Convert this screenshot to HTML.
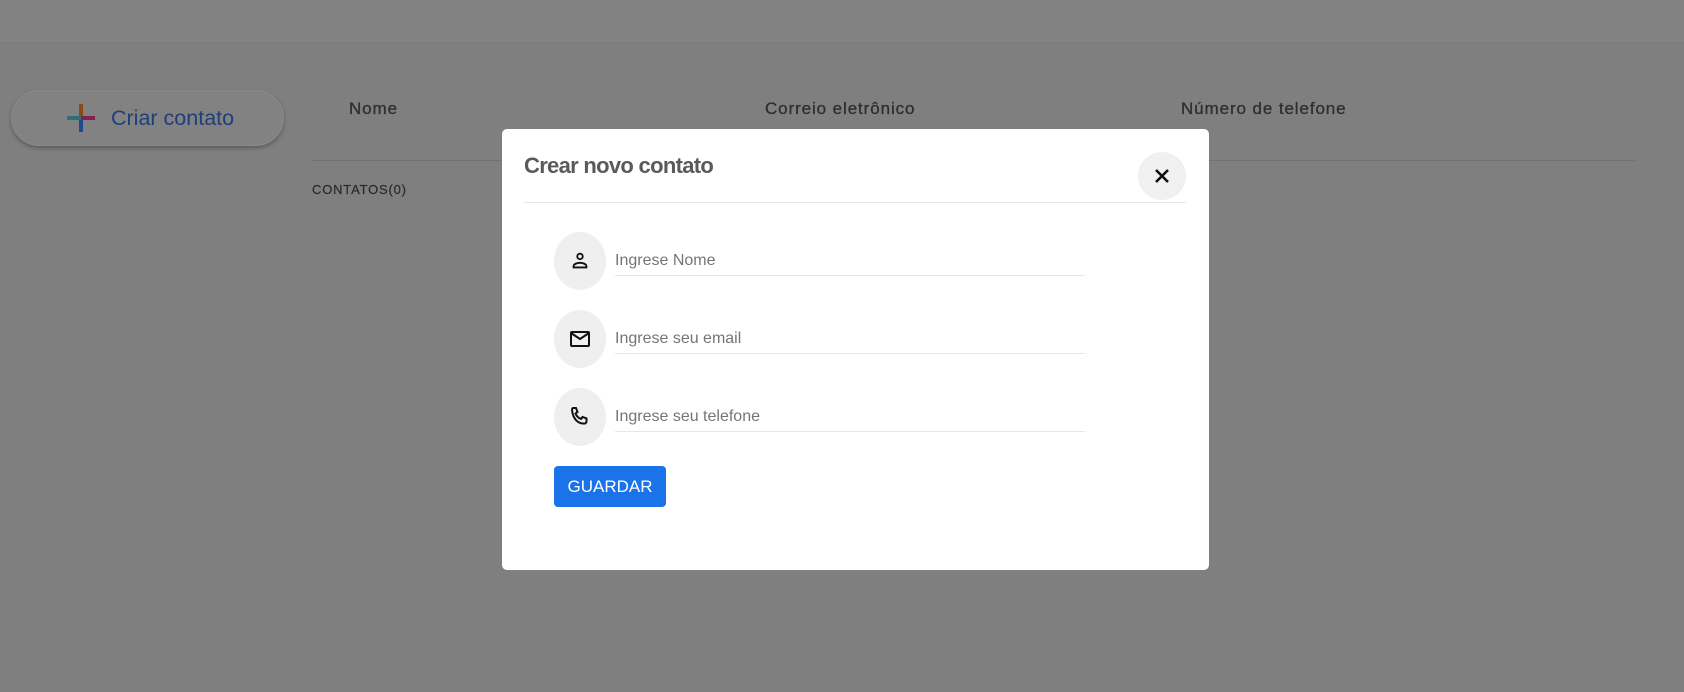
<!DOCTYPE html>
<html><head><meta charset="utf-8"><style>
*{box-sizing:border-box;margin:0;padding:0}
body{width:1684px;height:692px;background:#7f7f7f;font-family:"Liberation Sans",sans-serif;position:relative;overflow:hidden}
.hdr{position:absolute;left:0;top:0;width:1684px;height:41px;background:#828282;border-bottom:1px solid #858585}
.btn{position:absolute;left:11px;top:90px;width:273px;height:56px;border-radius:28px;background:#828282;box-shadow:0 2px 4px rgba(0,0,0,.3);border:1px solid #8a8a8a}
.btn span{position:absolute;left:99px;top:15px;font-size:21.5px;color:#1e3f7a}
.plus{position:absolute;left:55px;top:13px;width:28px;height:28px}
.th{position:absolute;top:99px;font-size:17px;color:#2e2e2e;letter-spacing:.9px;-webkit-text-stroke:.3px #2e2e2e}
.line{position:absolute;left:312px;top:160px;width:1323px;height:1px;background:#727272}
.cnt{position:absolute;left:312px;top:182px;font-size:13px;color:#2a2a2a;letter-spacing:.8px;-webkit-text-stroke:.2px #2a2a2a}
.modal{position:absolute;left:502px;top:129px;width:707px;height:441px;background:#fff;border-radius:5px}
.title{position:absolute;left:22px;top:24px;font-size:22px;font-weight:bold;color:#5a5a5a;letter-spacing:-.7px}
.close{position:absolute;left:636px;top:23px;width:48px;height:48px;border-radius:50%;background:#f0f0f0}
.div{position:absolute;left:22px;top:73px;width:662px;height:1px;background:#e6e6e6}
.ic{position:absolute;left:52px;width:52px;height:58px;border-radius:50%;background:#efefef;display:flex;align-items:center;justify-content:center}
.in{position:absolute;left:113px;width:470px;height:1px;background:#e8e8e8}
.ph{position:absolute;left:113px;font-size:16px;color:#757575}
.save{position:absolute;left:52px;top:337px;width:112px;height:41px;background:#1a73e8;border-radius:4px;color:#fff;font-size:17px;display:flex;align-items:center;justify-content:center}
</style></head><body>
<div class="hdr"></div>
<div class="btn"><svg class="plus" viewBox="0 0 28 28"><rect x="12" y="0" width="4" height="14" fill="#8a4a1a"/><rect x="12" y="14" width="4" height="14" fill="#1f4a8a"/><rect x="0" y="12" width="14" height="4" fill="#2f6f7a"/><rect x="14" y="12" width="14" height="4" fill="#8a1f4f"/></svg><span>Criar contato</span></div>
<div class="th" style="left:349px">Nome</div>
<div class="th" style="left:765px">Correio eletrônico</div>
<div class="th" style="left:1181px">Número de telefone</div>
<div class="line"></div>
<div class="cnt">CONTATOS(0)</div>
<div class="modal">
<div class="title">Crear novo contato</div>
<div class="close"><svg width="48" height="48" viewBox="0 0 48 48"><path d="M18 18L30 30M30 18L18 30" stroke="#111" stroke-width="2.6"/></svg></div>
<div class="div"></div>
<div class="ic" style="top:103px"><svg width="22" height="22" viewBox="0 0 24 24" fill="none" stroke="#111" stroke-width="2"><circle cx="12" cy="7" r="3"/><path d="M5 19v-1.5c0-2 3.5-3.5 7-3.5s7 1.5 7 3.5V19z"/></svg></div>
<div class="ph" style="top:123px">Ingrese Nome</div><div class="in" style="top:146px"></div>
<div class="ic" style="top:181px"><svg width="24" height="24" viewBox="0 0 24 24" fill="none" stroke="#111" stroke-width="2"><rect x="3" y="5" width="18" height="14" rx="1"/><path d="M3 6l9 6 9-6"/></svg></div>
<div class="ph" style="top:201px">Ingrese seu email</div><div class="in" style="top:224px"></div>
<div class="ic" style="top:259px"><svg width="24" height="24" viewBox="0 0 24 24" fill="none" stroke="#111" stroke-width="2"><path d="M5 3h3l1.5 4-2 1.5c1 2.5 3 4.5 5.5 5.5l1.5-2 4 1.5v3c0 1-1 2-2 2C10 19 5 14 4 5c0-1 .5-2 1-2z"/></svg></div>
<div class="ph" style="top:279px">Ingrese seu telefone</div><div class="in" style="top:302px"></div>
<div class="save">GUARDAR</div>
</div>
</body></html>
